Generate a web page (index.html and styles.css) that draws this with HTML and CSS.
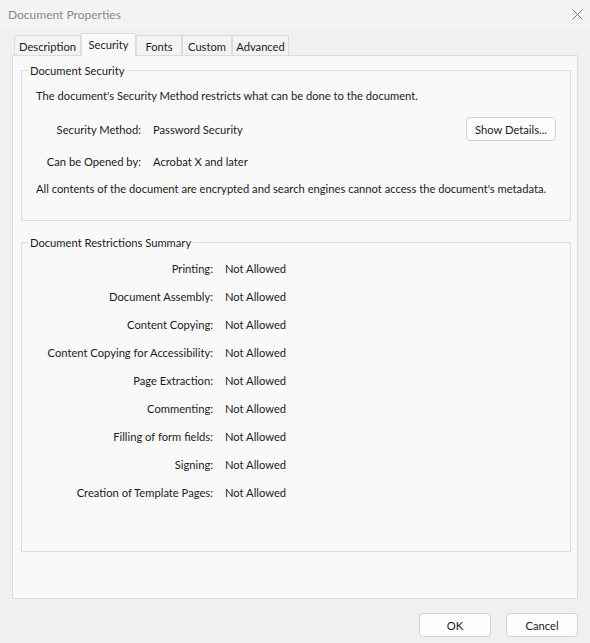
FILE: index.html
```html
<!DOCTYPE html>
<html lang="en">
<head>
<meta charset="utf-8">
<title>Document Properties</title>
<link rel="stylesheet" href="styles.css">
</head>
<body>
<div class="window">
  <header class="titlebar">
    <span class="title">Document Properties</span>
    <span class="close" aria-label="Close">
      <svg width="11" height="11" viewBox="0 0 11 11"><path d="M0.5 0.5 L10.5 10.5 M10.5 0.5 L0.5 10.5" stroke="#7a7a7a" stroke-width="1" fill="none"/></svg>
    </span>
  </header>

  <nav class="tabs">
    <div class="tab tab-description">Description</div>
    <div class="tab tab-security active">Security</div>
    <div class="tab tab-fonts">Fonts</div>
    <div class="tab tab-custom">Custom</div>
    <div class="tab tab-advanced">Advanced</div>
  </nav>

  <section class="panel">
    <fieldset class="group group-security">
      <legend>Document Security</legend>
      <p class="line intro">The document's Security Method restricts what can be done to the document.</p>
      <div class="prop-row first">
        <span class="label">Security Method:</span>
        <span class="value">Password Security</span>
        <button class="btn details">Show Details...</button>
      </div>
      <div class="prop-row">
        <span class="label">Can be Opened by:</span>
        <span class="value">Acrobat X and later</span>
      </div>
      <p class="line note">All contents of the document are encrypted and search engines cannot access the document's metadata.</p>
    </fieldset>

    <fieldset class="group group-restrictions">
      <legend>Document Restrictions Summary</legend>
      <dl class="restrictions">
        <dt>Printing:</dt><dd>Not Allowed</dd>
        <dt>Document Assembly:</dt><dd>Not Allowed</dd>
        <dt>Content Copying:</dt><dd>Not Allowed</dd>
        <dt>Content Copying for Accessibility:</dt><dd>Not Allowed</dd>
        <dt>Page Extraction:</dt><dd>Not Allowed</dd>
        <dt>Commenting:</dt><dd>Not Allowed</dd>
        <dt>Filling of form fields:</dt><dd>Not Allowed</dd>
        <dt>Signing:</dt><dd>Not Allowed</dd>
        <dt>Creation of Template Pages:</dt><dd>Not Allowed</dd>
      </dl>
    </fieldset>
  </section>

  <footer class="actions">
    <button class="btn action">OK</button>
    <button class="btn action">Cancel</button>
  </footer>
</div>
</body>
</html>
```

FILE: styles.css
```css
* { box-sizing: border-box; }

html, body {
  margin: 0;
  padding: 0;
  background: #f0f0f0;
}

body {
  font-family: Lato, "Open Sans", sans-serif;
  font-size: 11.2px;
  color: #1b1b1b;
}

.window {
  width: 590px;
  height: 643px;
  background: #f0f0f0;
  overflow: hidden;
}

.titlebar {
  height: 28px;
  background: #f3f3f3;
  display: flex;
  align-items: center;
  justify-content: space-between;
  padding: 0 7px 0 8px;
}

.title {
  font-size: 12px;
  color: #8a8a8a;
}

.close {
  display: flex;
  width: 11px;
  height: 11px;
}

.tabs {
  display: flex;
  align-items: flex-end;
  height: 22px;
  margin-top: 5px;
  padding-left: 14px;
}

.tab {
  height: 20px;
  line-height: 19px;
  padding-top: 1px;
  text-align: center;
  border: 1px solid #dcdcdc;
  border-bottom: none;
  background: #f3f3f3;
  color: #1b1b1b;
}

.tab.active {
  height: 23px;
  margin-bottom: -1px;
  padding-top: 0;
  line-height: 21px;
  background: #f9f9f9;
  position: relative;
  z-index: 1;
}

.tab-description { width: 67px; }
.tab-security { width: 55px; }
.tab-fonts { width: 46px; }
.tab-custom { width: 50px; }
.tab-advanced { width: 57px; }

.panel {
  margin: 0 12px;
  height: 544px;
  border: 1px solid #dcdcdc;
  background: #f9f9f9;
  padding: 0 6px 0 8px;
}

.group {
  margin: 0;
  border: 1px solid #dcdcdc;
  padding: 0;
  min-width: 0;
}

.group legend {
  margin-left: 6px;
  padding: 0 2px;
  line-height: 17px;
}

.group-security {
  margin-top: 6px;
  padding-top: 9px;
  padding-bottom: 23px;
}

.line {
  margin: 0;
  padding-left: 14px;
  line-height: 16px;
  white-space: nowrap;
}

.prop-row {
  display: flex;
  align-items: center;
  height: 24px;
  margin-top: 8px;
}

.prop-row.first {
  margin-top: 13px;
}

.prop-row .label {
  width: 119px;
  text-align: right;
}

.prop-row .value {
  margin-left: 12px;
}

.note {
  margin-top: 8px;
}

.btn {
  font-family: inherit;
  font-size: 11.2px;
  color: #1b1b1b;
  background: #fdfdfd;
  border: 1px solid #d2d2d2;
  border-radius: 4px;
  height: 24px;
  padding: 0;
}

.details {
  margin-left: auto;
  margin-right: 14px;
  width: 90px;
}

.group-restrictions {
  margin-top: 13px;
  padding-top: 3px;
  padding-bottom: 45px;
}

.restrictions {
  display: grid;
  grid-template-columns: 191px auto;
  grid-auto-rows: 28px;
  column-gap: 12px;
  align-items: center;
  margin: 0;
}

.restrictions dt {
  text-align: right;
}

.restrictions dd {
  margin: 0;
}

.actions {
  display: flex;
  justify-content: flex-end;
  gap: 15px;
  padding: 14px 12px 0 0;
}

.action {
  width: 72px;
  height: 24px;
}
```
